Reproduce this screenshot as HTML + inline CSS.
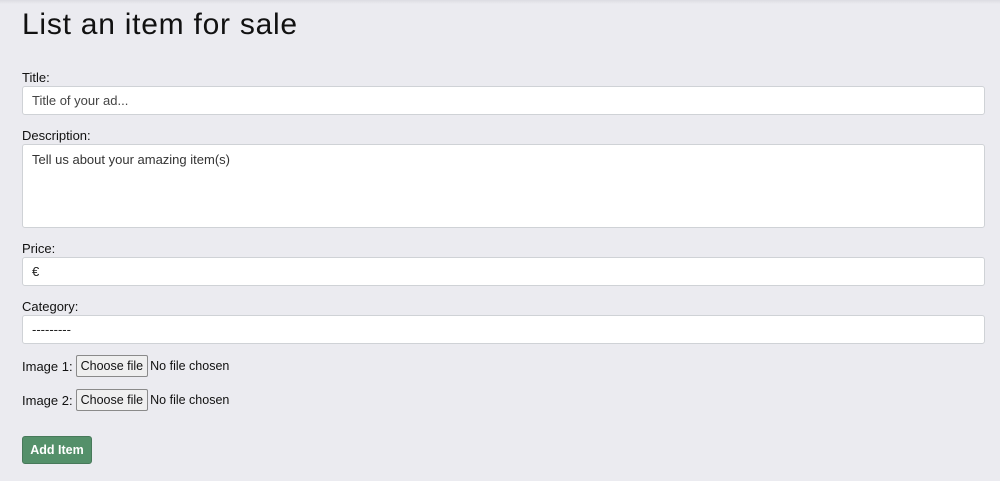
<!DOCTYPE html>
<html><head><meta charset="utf-8"><style>
body{margin:0;width:1000px;height:481px;background:#ebebf0;font-family:"Liberation Sans",sans-serif;color:#111;overflow:hidden;position:relative}
.top{position:absolute;left:0;top:0;width:1000px;height:4px;background:linear-gradient(#dcdce2,#ebebf0)}
h1{position:absolute;left:22px;top:8px;margin:0;font-weight:400;font-size:30px;letter-spacing:0.75px}
.l{position:absolute;left:22px;font-size:13px}
.i{position:absolute;left:22px;width:963px;background:#fff;border:1px solid #cfd2d6;border-radius:3px;font-size:13px;color:#444;box-sizing:border-box;padding:0 9px;display:flex;align-items:center}
.f{position:absolute;left:22px;font-size:13px;display:flex;align-items:center}
.b{border:1px solid #8a8a8a;background:#efefef;border-radius:2px;padding:3px 4px;margin:0 2px 0 3px;font-size:12.5px}
.n{font-size:12.5px}
.add{position:absolute;left:22px;top:436px;width:70px;height:28px;background:#54906a;border:1px solid #47795a;border-radius:3px;color:#fff;font-weight:bold;font-size:12.5px;display:flex;align-items:center;justify-content:center;box-sizing:border-box}
</style></head><body>
<div class="top"></div>
<h1>List an item for sale</h1>
<div class="l" style="top:70px">Title:</div>
<div class="i" style="top:86px;height:29px">Title of your ad...</div>
<div class="l" style="top:128px">Description:</div>
<div class="i" style="top:144px;height:84px;align-items:flex-start;padding-top:7px;color:#333">Tell us about your amazing item(s)</div>
<div class="l" style="top:241px">Price:</div>
<div class="i" style="top:257px;height:29px;color:#222">€</div>
<div class="l" style="top:299px">Category:</div>
<div class="i" style="top:315px;height:29px;color:#222">---------</div>
<div class="f" style="top:355px">Image 1:<span class="b">Choose file</span><span class="n">No file chosen</span></div>
<div class="f" style="top:389px">Image 2:<span class="b">Choose file</span><span class="n">No file chosen</span></div>
<div class="add">Add Item</div>
</body></html>
